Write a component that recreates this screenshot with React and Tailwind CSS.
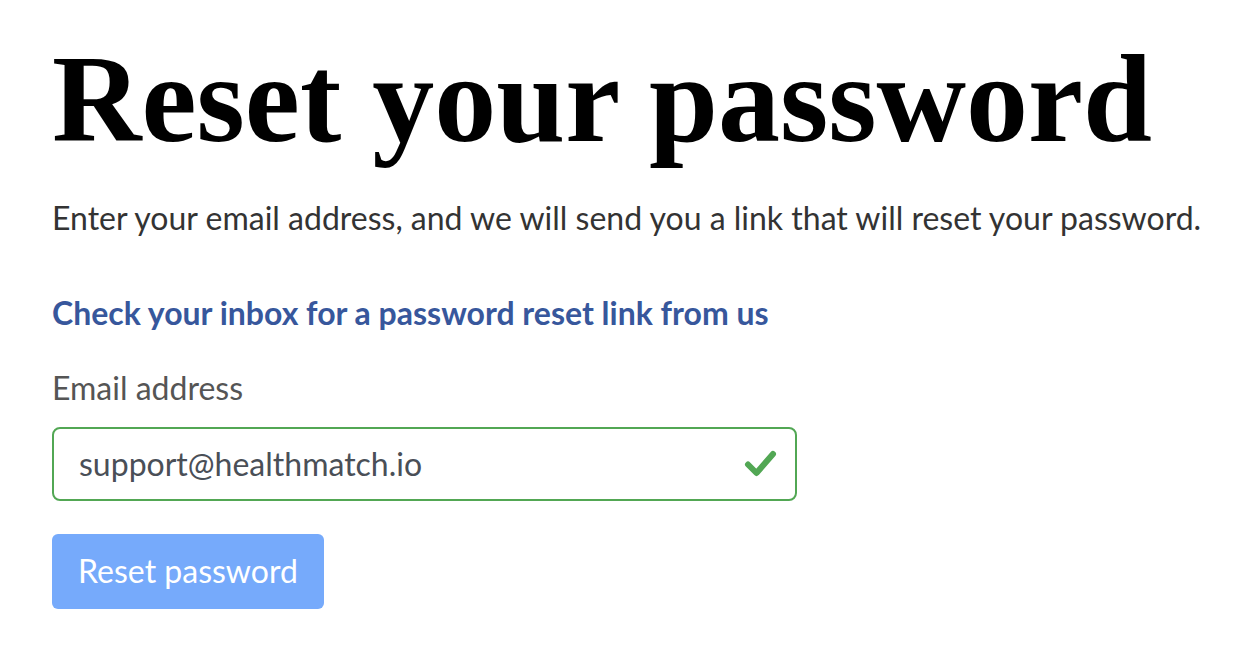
import React from 'react';

const CheckMark = () => (
  <svg width="34" height="30" viewBox="0 0 34 30" fill="none" className="shrink-0">
    <path d="M4 15.5 L12.5 24 L29 5" stroke="#52a754" strokeWidth="6" strokeLinecap="round" strokeLinejoin="round" />
  </svg>
);

const ResetPassword = () => {
  return (
    <div className="min-h-screen bg-white pl-[52px] pt-[38px] font-['Lato',sans-serif]">
      <h1 className="text-[124px] leading-none font-bold text-black font-['Liberation_Serif',serif]">
        Reset your password
      </h1>

      <p className="mt-[37px] text-[32px] leading-[1.2] text-[#333333]">
        Enter your email address, and we will send you a link that will reset your password.
      </p>

      <p className="mt-[57px] text-[32px] leading-[1.2] font-bold text-[#37579c]">
        Check your inbox for a password reset link from us
      </p>

      <label className="block mt-[36px] text-[32px] leading-[1.2] text-[#555555]">
        Email address
      </label>

      <div className="mt-[20px] w-[745px] h-[74px] border-2 border-[#52a754] rounded-[8px] flex items-center justify-between pl-[25px] pr-[17px]">
        <span className="text-[32px] leading-[1.2] text-[#4a4f57]">support@healthmatch.io</span>
        <CheckMark />
      </div>

      <button className="mt-[33px] w-[272px] h-[75px] rounded-[6px] bg-[#76aafb] text-white text-[32px] leading-[1.2] flex items-center justify-center">
        Reset password
      </button>
    </div>
  );
};

export default ResetPassword;
